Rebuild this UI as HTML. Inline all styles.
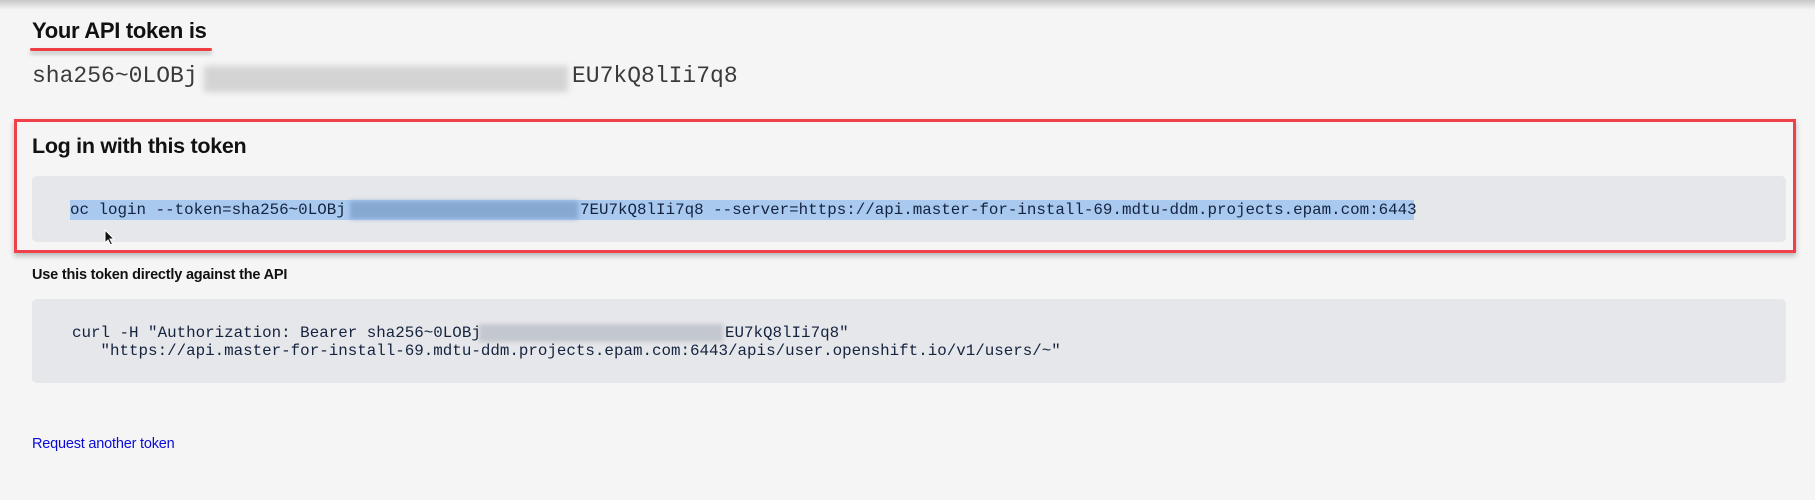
<!DOCTYPE html>
<html><head><meta charset="utf-8"><style>
*{margin:0;padding:0;box-sizing:border-box}
html,body{width:1815px;height:500px;overflow:hidden;background:#f5f5f5;font-family:"Liberation Sans",Arial,sans-serif;position:relative}
.topsh{position:absolute;left:0;top:0;width:1815px;height:10px;background:linear-gradient(#c8c8c8,#f5f5f5)}
.abs{position:absolute;white-space:pre}
.mono{font-family:"Liberation Mono",monospace}
.blur{position:absolute;filter:blur(3px)}
</style></head><body>
<div class="topsh"></div>
<div class="abs" style="left:32px;top:18px;font-size:22px;font-weight:bold;color:#111;letter-spacing:-0.3px">Your API token is</div>
<div style="position:absolute;left:30px;top:48px;width:182px;height:3px;background:#ee3e42;border-radius:2px;box-shadow:0 3px 4px rgba(0,0,0,.25)"></div>
<div class="abs mono" style="left:32px;top:63px;font-size:23px;color:#3a3a3a">sha256~0LOBj</div>
<div class="blur" style="left:204px;top:66px;width:364px;height:26px;background:#d4d4d4"></div>
<div class="abs mono" style="left:572px;top:63px;font-size:23px;color:#3a3a3a">EU7kQ8lIi7q8</div>

<div style="position:absolute;left:14px;top:119px;width:1782px;height:134px;border:3px solid #f0404a;box-shadow:0 3px 5px rgba(0,0,0,.25)"></div>
<div class="abs" style="left:32px;top:134px;font-size:21.5px;font-weight:bold;color:#111;letter-spacing:-0.3px">Log in with this token</div>
<div style="position:absolute;left:32px;top:176px;width:1754px;height:66px;background:#e6e7ea;border-radius:5px"></div>
<div style="position:absolute;left:70px;top:200px;width:1344px;height:20px;background:#a9c9ef"></div>
<div class="blur" style="left:350px;top:201px;width:228px;height:18px;background:#86a9d2;filter:blur(2px)"></div>
<div class="abs mono" style="left:70px;top:200px;font-size:15.85px;line-height:20px;color:#14233f">oc login --token=sha256~0LOBj</div>
<div class="abs mono" style="left:580px;top:200px;font-size:15.85px;line-height:20px;color:#14233f">7EU7kQ8lIi7q8 --server=https://api.master-for-install-69.mdtu-ddm.projects.epam.com:6443</div>
<svg style="position:absolute;left:104px;top:229px" width="12" height="18" viewBox="0 0 12 18"><path d="M1 1 L1 14 L4 11 L6.5 16 L8.5 15 L6 10 L10 10 Z" fill="#111" stroke="#fff" stroke-width="1"/></svg>

<div class="abs" style="left:32px;top:267px;font-size:14.5px;font-weight:bold;color:#111;letter-spacing:-0.2px">Use this token directly against the API</div>
<div style="position:absolute;left:32px;top:299px;width:1754px;height:84px;background:#e6e7ea;border-radius:5px"></div>
<div class="blur" style="left:479px;top:324px;width:244px;height:18px;background:#c3c7ce;filter:blur(2px)"></div>
<div class="abs mono" style="left:72px;top:324px;font-size:15.85px;line-height:18px;color:#14233f">curl -H "Authorization: Bearer sha256~0LOBj</div>
<div class="abs mono" style="left:725px;top:324px;font-size:15.85px;line-height:18px;color:#14233f">EU7kQ8lIi7q8"</div>
<div class="abs mono" style="left:72px;top:342px;font-size:15.85px;line-height:18px;color:#14233f">   "https://api.master-for-install-69.mdtu-ddm.projects.epam.com:6443/apis/user.openshift.io/v1/users/~"</div>

<div class="abs" style="left:32px;top:436px;font-size:14.5px;color:#0a0ad8;letter-spacing:-0.2px">Request another token</div>
</body></html>
